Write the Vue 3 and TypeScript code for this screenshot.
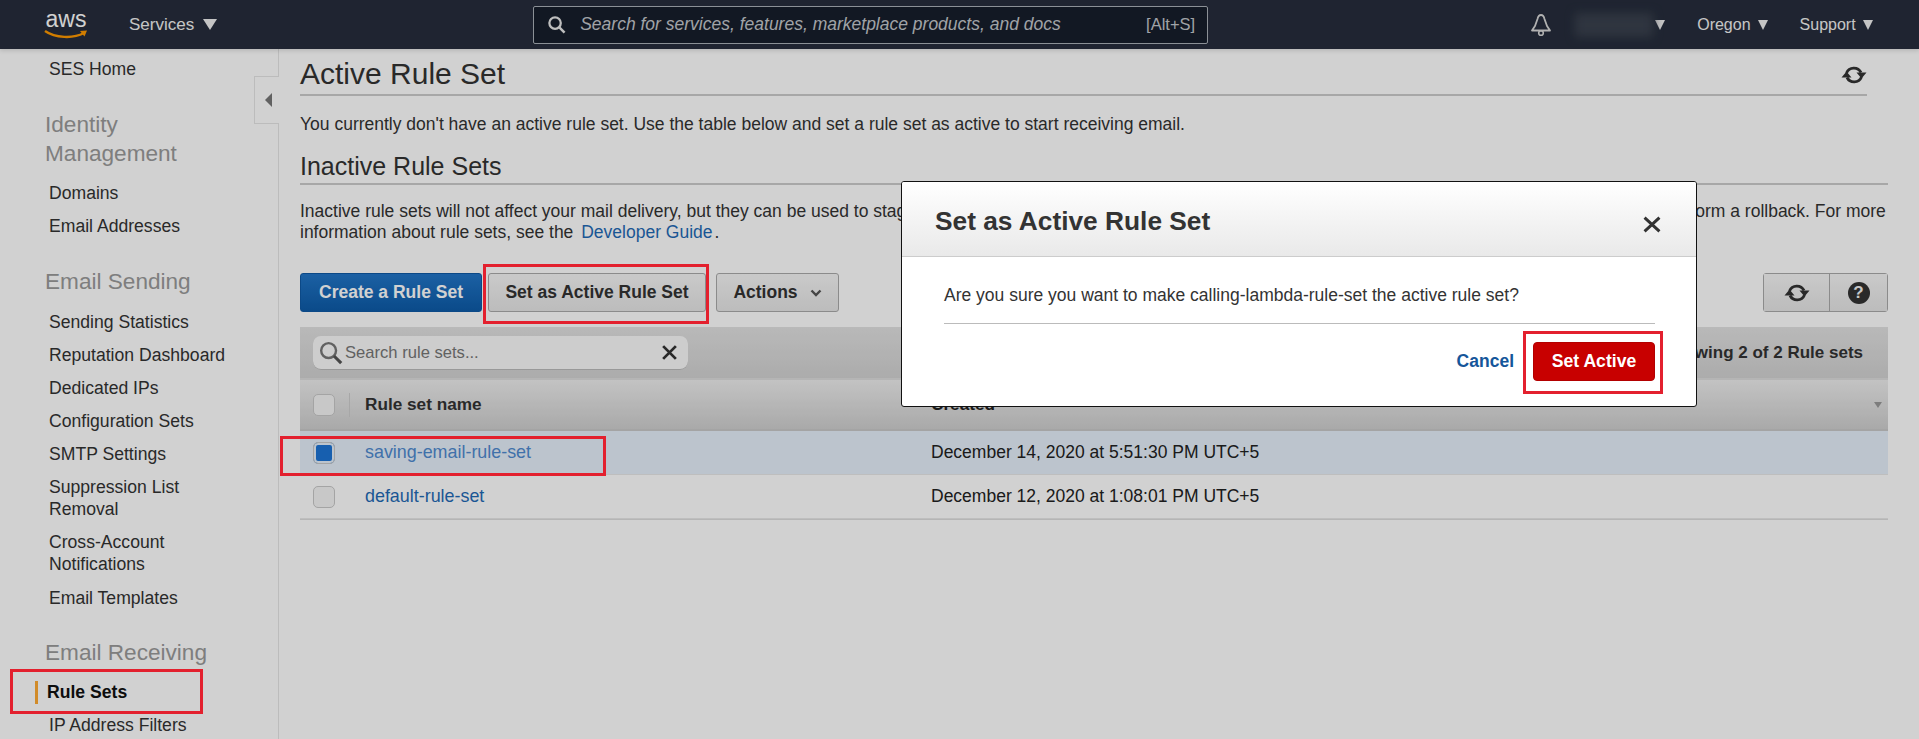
<script setup lang="ts">
// SES rule sets page with the confirm dialog open
const identityLinks = ['Domains', 'Email Addresses']
const sendingLinks = [
  'Sending Statistics',
  'Reputation Dashboard',
  'Dedicated IPs',
  'Configuration Sets',
  'SMTP Settings',
  'Suppression List Removal',
  'Cross-Account Notifications',
  'Email Templates',
]

interface RuleSet {
  name: string
  created: string
  selected: boolean
}

const ruleSets: RuleSet[] = [
  { name: 'saving-email-rule-set', created: 'December 14, 2020 at 5:51:30 PM UTC+5', selected: true },
  { name: 'default-rule-set', created: 'December 12, 2020 at 1:08:01 PM UTC+5', selected: false },
]

// two arcs, each ending in a solid arrow head
const refreshArcs = 'M5.500 9A8 8 0 0 1 20 8.500M20.500 13A8 8 0 0 1 6 13.500'
const refreshHeads = 'M15.500 8.500h10l-5 6zM.5 13.500h10l-5-6z'
</script>

<template>
  <div class="page">
    <header class="nav">
      <div class="logo">
        <span class="logo-text">aws</span>
        <svg class="logo-smile" viewBox="0 0 46 12" width="46" height="12">
          <path d="M2 2C12 9 30 10 41 4" fill="none" stroke="#f90" stroke-width="2.400" />
          <path d="M37 2l7-.5-2.500 6z" fill="#f90" />
        </svg>
      </div>
      <span class="nav-link services">Services<i class="tri"></i></span>
      <div class="nav-search">
        <svg viewBox="0 0 20 20" width="19" height="19">
          <circle cx="8.500" cy="8.500" r="6" fill="none" stroke="#e8e8e8" stroke-width="2.400" />
          <path d="M13 13l5.500 5.500" stroke="#e8e8e8" stroke-width="2.600" />
        </svg>
        <span class="search-text">Search for services, features, marketplace products, and docs</span>
        <span class="search-key">[Alt+S]</span>
      </div>
      <div class="nav-right">
        <svg class="bell" viewBox="0 0 22 24" width="22" height="24">
          <path d="M11 2C9 2 8 3.500 7.500 6L5 13l-3 4.500h18L17 13l-2.500-7C14 3.500 13 2 11 2z" fill="none" stroke="#d8d8d8" stroke-width="1.800" stroke-linejoin="round" />
          <circle cx="11" cy="20" r="2.300" fill="none" stroke="#d8d8d8" stroke-width="1.600" />
        </svg>
        <span class="account"><span class="account-blur"></span><i class="tri small"></i></span>
        <span class="nav-link small region">Oregon<i class="tri small"></i></span>
        <span class="nav-link small support">Support<i class="tri small"></i></span>
      </div>
    </header>

    <div class="body">
      <aside class="sidebar">
        <a class="side-link home">SES Home</a>

        <h3 class="side-title identity">Identity Management</h3>
        <a v-for="l in identityLinks" :key="l" class="side-link">{{ l }}</a>

        <h3 class="side-title">Email Sending</h3>
        <a v-for="l in sendingLinks" :key="l" class="side-link">{{ l }}</a>

        <h3 class="side-title receiving">Email Receiving</h3>
        <a class="side-link active">Rule Sets</a>
        <a class="side-link">IP Address Filters</a>
      </aside>

      <main class="main">
        <div class="collapse"><i></i></div>

        <div class="title-row">
          <h1>Active Rule Set</h1>
          <svg class="title-refresh" viewBox="0 0 26 22" width="26" height="22">
            <path :d="refreshArcs" fill="none" stroke="#333" stroke-width="2.800" />
            <path :d="refreshHeads" fill="#333" />
          </svg>
        </div>
        <p class="intro">You currently don't have an active rule set. Use the table below and set a rule set as active to start receiving email.</p>

        <h2>Inactive Rule Sets</h2>
        <p class="desc">
          Inactive rule sets will not affect your mail delivery, but they can be used to stage changes to your active rule set, or to keep earlier versions of it so that you can then also quickly perform a rollback. For more<br />
          information about rule sets, see the <a class="link guide">Developer Guide</a>.
        </p>

        <div class="actions">
          <button class="btn primary">Create a Rule Set</button>
          <button class="btn set-active">Set as Active Rule Set</button>
          <button class="btn actions-btn">Actions
            <svg viewBox="0 0 12 8" width="12" height="8"><path d="M1.500 1.500L6 6l4.500-4.500" fill="none" stroke="#555" stroke-width="2.400" /></svg>
          </button>
          <div class="icon-group">
            <button class="icon-btn refresh">
              <svg viewBox="0 0 26 22" width="26" height="22">
                <path :d="refreshArcs" fill="none" stroke="#333" stroke-width="2.800" />
                <path :d="refreshHeads" fill="#333" />
              </svg>
            </button>
            <button class="icon-btn">
              <span class="help">?</span>
            </button>
          </div>
        </div>

        <section class="table">
          <div class="toolbar">
            <div class="filter">
              <svg viewBox="0 0 20 20" width="24" height="24">
                <circle cx="8" cy="8" r="6.200" fill="none" stroke="#777" stroke-width="2" />
                <path d="M12.500 12.500l6 6" stroke="#555" stroke-width="2.600" />
              </svg>
              <span class="filter-text">Search rule sets...</span>
              <svg class="filter-x" viewBox="0 0 16 16" width="19" height="17">
                <path d="M2 2l12 12M14 2L2 14" stroke="#333" stroke-width="2.600" />
              </svg>
            </div>
            <span class="count">Viewing 2 of 2 Rule sets</span>
          </div>
          <div class="row head">
            <span class="check-cell"><i class="check"></i></span>
            <span class="name-cell">Rule set name</span>
            <span class="date-cell">Created</span>
            <i class="sort"></i>
          </div>
          <div v-for="r in ruleSets" :key="r.name" class="row" :class="{ selected: r.selected }">
            <span class="check-cell"><i class="check" :class="{ on: r.selected }"></i></span>
            <a class="name-cell link">{{ r.name }}</a>
            <span class="date-cell">{{ r.created }}</span>
          </div>
        </section>
      </main>
    </div>

    <div class="dim"></div>

    <div class="modal">
      <div class="modal-head">
        <span>Set as Active Rule Set</span>
        <svg viewBox="0 0 18 16" width="20" height="17">
          <path d="M2 1.500l14 13M16 1.500l-14 13" stroke="#333" stroke-width="2.800" />
        </svg>
      </div>
      <div class="modal-body">
        <p>Are you sure you want to make calling-lambda-rule-set the active rule set?</p>
        <div class="modal-foot">
          <a class="cancel">Cancel</a>
          <button class="danger">Set Active</button>
        </div>
      </div>
    </div>

    <!-- red annotation boxes drawn over the screenshot -->
    <div class="mark m-rule"></div>
    <div class="mark m-set"></div>
    <div class="mark m-row"></div>
    <div class="mark m-confirm"></div>
  </div>
</template>

<style>
html, body {
  margin: 0;
  background: #fff;
}
</style>

<style scoped>
.page {
  position: relative;
  width: 1919px;
  height: 739px;
  overflow: hidden;
  background: #fff;
  color: #333;
  font-family: "Liberation Sans", Arial, sans-serif;
  font-size: 17.500px;
}

/* top bar */
.nav {
  position: relative;
  display: flex;
  align-items: center;
  height: 49px;
  padding-left: 43px;
  background: #262d3c;
  color: #f2f2f2;
  box-sizing: border-box;
  box-shadow: 0 2px 4px rgba(0, 0, 0, 0.12);
}
.logo {
  position: relative;
  width: 46px;
  height: 38px;
}
.logo-text {
  display: block;
  font-size: 23px;
  line-height: 26px;
  text-align: center;
  color: #fff;
}
.logo-smile {
  display: block;
  margin-top: -3px;
}
.nav-link {
  display: flex;
  align-items: center;
  font-size: 17px;
}
.services {
  margin-left: 40px;
}
.tri {
  display: inline-block;
  width: 0;
  height: 0;
  margin-left: 9px;
  border-left: 7px solid transparent;
  border-right: 7px solid transparent;
  border-top: 11px solid #f0f0f0;
}
.tri.small {
  margin-left: 7px;
  border-left-width: 5.500px;
  border-right-width: 5.500px;
  border-top-width: 10px;
}
.nav-search {
  display: flex;
  align-items: center;
  width: 675px;
  height: 38px;
  margin-left: 316px;
  padding: 0 12px 0 13px;
  box-sizing: border-box;
  border: 1px solid #aab0b8;
  border-radius: 2px;
  background: #161e2b;
}
.search-text {
  margin-left: 14px;
  font-size: 17.500px;
  font-style: italic;
  color: #c4c7cc;
}
.search-key {
  margin-left: auto;
  font-size: 16.500px;
  color: #c4c7cc;
}
.nav-right {
  display: flex;
  align-items: center;
  margin-left: 322px;
}
.bell {
  display: block;
}
.account {
  display: flex;
  align-items: center;
  margin-left: 23px;
}
.account-blur {
  width: 78px;
  height: 24px;
  background: #3a414e;
  filter: blur(5px);
}
.account .tri {
  margin-left: 2px;
}
.nav-link.small {
  font-size: 16px;
}
.region {
  margin-left: 32px;
}
.support {
  margin-left: 32px;
}

/* page body */
.body {
  display: flex;
  height: 690px;
}
.sidebar {
  width: 279px;
  flex: none;
  box-sizing: border-box;
  padding: 3px 0 0 49px;
  border-right: 1px solid #e6e6e6;
  font-size: 17.600px;
}
.side-link {
  display: block;
  padding: 5.580px 0;
  line-height: 22px;
  width: 190px;
  color: #333;
}
.side-title {
  margin: 25px 0 8.500px -4px;
  width: 200px;
  font-size: 22.600px;
  font-weight: 400;
  line-height: 29px;
  color: #9a9a9a;
}
.side-title.identity {
  margin: 24.500px 0 8.500px -4px;
}
.side-title.receiving {
  margin-top: 24px;
}
.side-link.active {
  font-weight: 700;
  color: #111;
  position: relative;
  margin-left: -2px;
}
.side-link.active::before {
  content: "";
  position: absolute;
  left: -12px;
  top: 5px;
  bottom: 5px;
  width: 3px;
  background: #ffaa33;
}
.main {
  position: relative;
  flex: 1;
  padding: 0 31px 0 21px;
  min-width: 0;
}
.collapse {
  position: absolute;
  left: -25px;
  top: 27px;
  display: flex;
  align-items: center;
  width: 25px;
  height: 48px;
  box-sizing: border-box;
  padding-left: 10px;
  border: 1px solid #e6e6e6;
  border-right: 0;
  background: #fff;
}
.collapse i {
  width: 0;
  height: 0;
  border-top: 7px solid transparent;
  border-bottom: 7px solid transparent;
  border-right: 7px solid #777;
}
.title-row {
  display: flex;
  justify-content: space-between;
  align-items: center;
  width: 1567px;
  height: 45px;
  border-bottom: 2px solid #ccc;
}
h1 {
  margin: 0;
  padding-top: 4px;
  font-size: 30px;
  font-weight: 400;
  line-height: 41px;
}
.title-refresh {
  margin-top: 6px;
}
.intro {
  margin: 17px 0 0;
  line-height: 22px;
}
h2 {
  margin: 16px 0 0;
  padding-bottom: 2px;
  font-size: 25px;
  font-weight: 400;
  line-height: 30px;
  border-bottom: 2px solid #ccc;
}
.desc {
  margin: 16px 0 0;
  line-height: 21px;
  white-space: nowrap;
}
.link {
  color: #1f6ab5;
}
.selected .link {
  color: #4f8ad0;
}
.guide {
  margin: 0 2px 0 3px;
}

/* toolbar buttons */
.actions {
  display: flex;
  align-items: stretch;
  height: 39px;
  margin-top: 30px;
}
.btn {
  padding: 0;
  border-radius: 3px;
  font-family: inherit;
  font-size: 17.500px;
  font-weight: 700;
}
.primary {
  width: 182px;
  border: 1px solid #0f5aa5;
  background: linear-gradient(#2276c8, #0d5ba8);
  color: #fff;
}
.set-active {
  width: 218px;
  margin-left: 6px;
  border: 1px solid #aaa;
  background: linear-gradient(#f6f6f6, #e6e6e6);
  color: #333;
}
.actions-btn {
  display: flex;
  align-items: center;
  justify-content: center;
  gap: 12px;
  width: 123px;
  margin-left: 10px;
  border: 1px solid #aaa;
  background: linear-gradient(#f6f6f6, #e6e6e6);
  color: #333;
}
.icon-group {
  display: flex;
  margin-left: auto;
  border: 1px solid #aaa;
  border-radius: 3px;
}
.icon-btn {
  display: flex;
  align-items: center;
  justify-content: center;
  width: 58px;
  padding: 0;
  border: 0;
  background: linear-gradient(#f6f6f6, #e6e6e6);
}
.icon-btn.refresh {
  width: 65px;
}
.icon-btn + .icon-btn {
  border-left: 1px solid #aaa;
}
.help {
  display: block;
  width: 22px;
  height: 22px;
  border-radius: 50%;
  background: #333;
  color: #f4f4f4;
  font-size: 17px;
  font-weight: 700;
  line-height: 22px;
  text-align: center;
}

/* rule set table */
.table {
  margin-top: 15px;
  border-bottom: 1px solid #ddd;
}
.toolbar {
  display: flex;
  align-items: center;
  justify-content: space-between;
  height: 51px;
  padding: 0 25px 0 13px;
  background: linear-gradient(#e2e2e2, #d2d2d2);
  border-bottom: 2px solid #ddd;
}
.filter {
  display: flex;
  align-items: center;
  width: 375px;
  height: 34px;
  box-sizing: border-box;
  padding: 0 9px 0 6px;
  border-radius: 8px;
  background: #fafafa;
  box-shadow: inset 0 -1px 0 #bbb;
}
.filter-text {
  margin-left: 2px;
  font-size: 16.600px;
  color: #777;
}
.filter-x {
  margin-left: auto;
}
.count {
  font-size: 17px;
  font-weight: 700;
}
.row {
  display: flex;
  align-items: center;
  height: 43px;
  border-bottom: 1px solid #e8e8e8;
}
.row.head {
  position: relative;
  height: 49px;
  background: linear-gradient(#eeeeee, #cfcfcf);
  border-bottom: 2px solid #c8c8c8;
  font-size: 17.200px;
  font-weight: 700;
}
.row.selected {
  background: #e6f0fa;
}
.check-cell {
  display: flex;
  align-items: center;
  width: 64px;
  height: 24px;
  box-sizing: border-box;
  padding-left: 13px;
}
.head .check-cell {
  border-right: 1px solid #ccc;
  width: 50px;
  margin-right: 14px;
}
.check {
  display: block;
  width: 22px;
  height: 22px;
  box-sizing: border-box;
  border: 1px solid #c8c8c8;
  border-radius: 5px;
  background: #f4f4f4;
}
.check.on {
  background: #1d75d6;
  box-shadow: inset 0 0 0 2px #e6f0fa;
}
.name-cell {
  width: 566px;
  padding-left: 1px;
}
a.name-cell {
  font-size: 17.900px;
}
.sort {
  position: absolute;
  right: 6px;
  top: 22px;
  border-left: 4px solid transparent;
  border-right: 4px solid transparent;
  border-top: 6px solid #999;
}
.date-cell {
  color: #222;
}

/* everything under the dialog is dimmed */
.dim {
  position: absolute;
  inset: 0;
  background: rgba(0, 0, 0, 0.18);
}

.modal {
  position: absolute;
  left: 901px;
  top: 181px;
  width: 796px;
  height: 226px;
  box-sizing: border-box;
  border: 1px solid #111;
  border-radius: 3px;
  background: #fff;
  overflow: hidden;
}
.modal-head {
  display: flex;
  align-items: center;
  justify-content: space-between;
  height: 75px;
  box-sizing: border-box;
  padding: 5px 34px 0 33px;
  background: linear-gradient(#fff, #e9e9e9);
  border-bottom: 1px solid #ccc;
  font-size: 26.300px;
  font-weight: 700;
  color: #333;
}
.modal-head svg {
  margin-top: 5px;
}
.modal-body {
  padding: 0 41px 0 42px;
}
.modal-body p {
  margin: 0;
  padding-top: 10px;
  line-height: 56px;
  border-bottom: 1px solid #bbb;
  color: #333;
}
.modal-foot {
  display: flex;
  align-items: center;
  justify-content: flex-end;
  gap: 19px;
  margin-top: 18px;
}
.cancel {
  color: #15569a;
  font-weight: 700;
}
.danger {
  width: 122px;
  height: 39px;
  padding: 0;
  border: 1px solid #b30000;
  border-radius: 4px;
  background: #c80000;
  color: #fff;
  font-family: inherit;
  font-size: 17.600px;
  font-weight: 700;
}

/* annotations */
.mark {
  position: absolute;
  box-sizing: border-box;
  border: 3px solid #e3202e;
}
.m-rule {
  left: 10px;
  top: 669px;
  width: 193px;
  height: 45px;
}
.m-set {
  left: 483px;
  top: 264px;
  width: 226px;
  height: 60px;
}
.m-row {
  left: 280px;
  top: 436px;
  width: 326px;
  height: 40px;
}
.m-confirm {
  left: 1523px;
  top: 331px;
  width: 140px;
  height: 63px;
}
</style>
